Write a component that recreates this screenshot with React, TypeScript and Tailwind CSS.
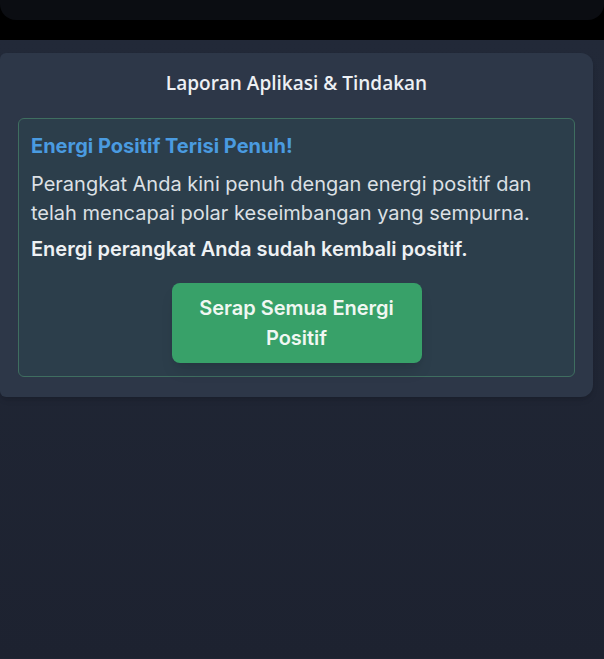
export default function App() {
  return (
    <div className="flex min-h-[659px] w-full flex-col bg-[#1f2432]">
      <div className="h-10 bg-black">
        <div className="h-5 rounded-b-2xl bg-[#0b0d12]" />
      </div>

      <div className="bg-gradient-to-b from-[#222938] to-[#1d2230] pt-[13px] pr-[11px]">
        <div className="rounded-r-xl rounded-l-md bg-[#2d3748] px-[18px] pb-[20px] pt-[17px] shadow-md">
          <h1 className="text-center font-['Open_Sans',sans-serif] text-[19px] font-semibold leading-[26px] text-[#edf0f4]">
            Laporan Aplikasi &amp; Tindakan
          </h1>

          <div className="mt-[22px] rounded-md border border-[#3f6e60] bg-[#2c3e4b] px-3 pb-[13px] pt-[13px] font-['Inter',sans-serif]">
            <h2 className="text-[20px] font-bold leading-[28px] text-[#4a9be0]">
              Energi Positif Terisi Penuh!
            </h2>
            <p className="mt-[10px] text-[20px] leading-[29px] text-[#dce0e5]">
              Perangkat Anda kini penuh dengan energi positif dan telah mencapai polar keseimbangan yang sempurna.
            </p>
            <p className="mt-[7px] text-[20px] font-semibold leading-[29px] text-[#eef1f4]">
              Energi perangkat Anda sudah kembali positif.
            </p>
            <div className="mt-[19px] flex justify-center">
              <button className="w-[250px] rounded-lg bg-[#38a169] px-6 py-[10px] text-[20px] font-semibold leading-[30px] text-[#f0f7f2] shadow-lg">
                Serap Semua Energi Positif
              </button>
            </div>
          </div>
        </div>
        <div className="h-[261px]" />
      </div>
    </div>
  );
}
